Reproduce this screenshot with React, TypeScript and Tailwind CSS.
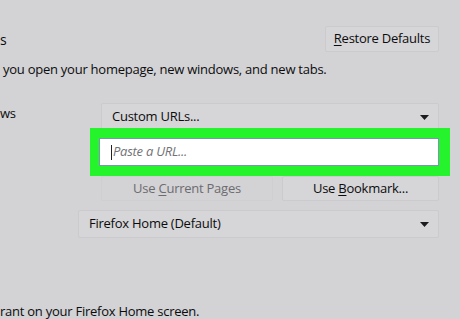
import React from "react";

function Caret() {
  return (
    <svg width="9" height="5" viewBox="0 0 9 5" className="shrink-0">
      <path d="M0 0h9L4.5 5z" fill="#1b1b1d" />
    </svg>
  );
}

function Dropdown({ label, className }: { label: string; className?: string }) {
  return (
    <div
      className={
        "flex items-center justify-between rounded-[2px] border border-[#cbcacd] bg-[#d6d5d8] pl-[10px] pr-[9px] " +
        (className ?? "")
      }>
      <span>{label}</span>
      <Caret />
    </div>
  );
}

export default function App() {
  return (
    <div
      className="relative h-[319px] w-[460px] overflow-hidden bg-[#d3d2d5] text-[13px] tracking-[-0.25px] text-[#0c0c0d]"
      style={{ fontFamily: '"Open Sans", "Noto Sans", sans-serif' }}>
      {/* header row */}
      <div className="flex items-center justify-between pt-[26px] pr-[21px]">
        <h2 className="mt-[2px] text-[14px] leading-none">s</h2>
        <button className="flex h-[26px] w-[114px] items-center justify-center rounded-[2px] border border-[#cbcacd] bg-[#d6d5d8]">
          <span>
            <span className="underline underline-offset-2">R</span>estore Defaults
          </span>
        </button>
      </div>

      <p className="mt-[9px] pl-[3px] leading-[16px]">
        you open your homepage, new windows, and new tabs.
      </p>

      {/* homepage and new windows */}
      <div className="mt-[26px] flex">
        <div className="w-[101px] pt-[2px] leading-[16px]">ws</div>
        <div className="flex w-[338px] flex-col">
          <Dropdown label="Custom URLs..." className="h-[28px]" />
          <div className="relative z-10 -mx-[11px] -mt-[3px] bg-[#25f42c] px-[10px] py-[10px]">
            <div className="ml-[-1px] mr-[1px] flex h-[28px] items-center border border-[#7d93b8] bg-white pl-[11px]">
              <span className="mr-[1px] h-[15px] w-px bg-[#222]" />
              <span className="italic text-[#727276]">Paste a URL...</span>
            </div>
          </div>
          <div className="flex gap-[9px]">
            <button className="flex h-[25px] flex-1 items-center justify-center rounded-[2px] border border-[#cfced1] text-[#6c6c70]">
              <span>
                Use <span className="underline underline-offset-2">C</span>urrent Pages
              </span>
            </button>
            <button className="flex h-[25px] w-[157px] items-center justify-center rounded-[2px] border border-[#cbcacd] bg-[#d6d5d8]">
              <span>
                Use <span className="underline underline-offset-2">B</span>ookmark...
              </span>
            </button>
          </div>
        </div>
      </div>

      {/* new tabs */}
      <div className="mt-[9px] flex pl-[78px] pr-[21px]">
        <Dropdown label="Firefox Home (Default)" className="h-[28px] w-full" />
      </div>

      <p className="mt-[65px] leading-[16px]">rant on your Firefox Home screen.</p>
    </div>
  );
}
